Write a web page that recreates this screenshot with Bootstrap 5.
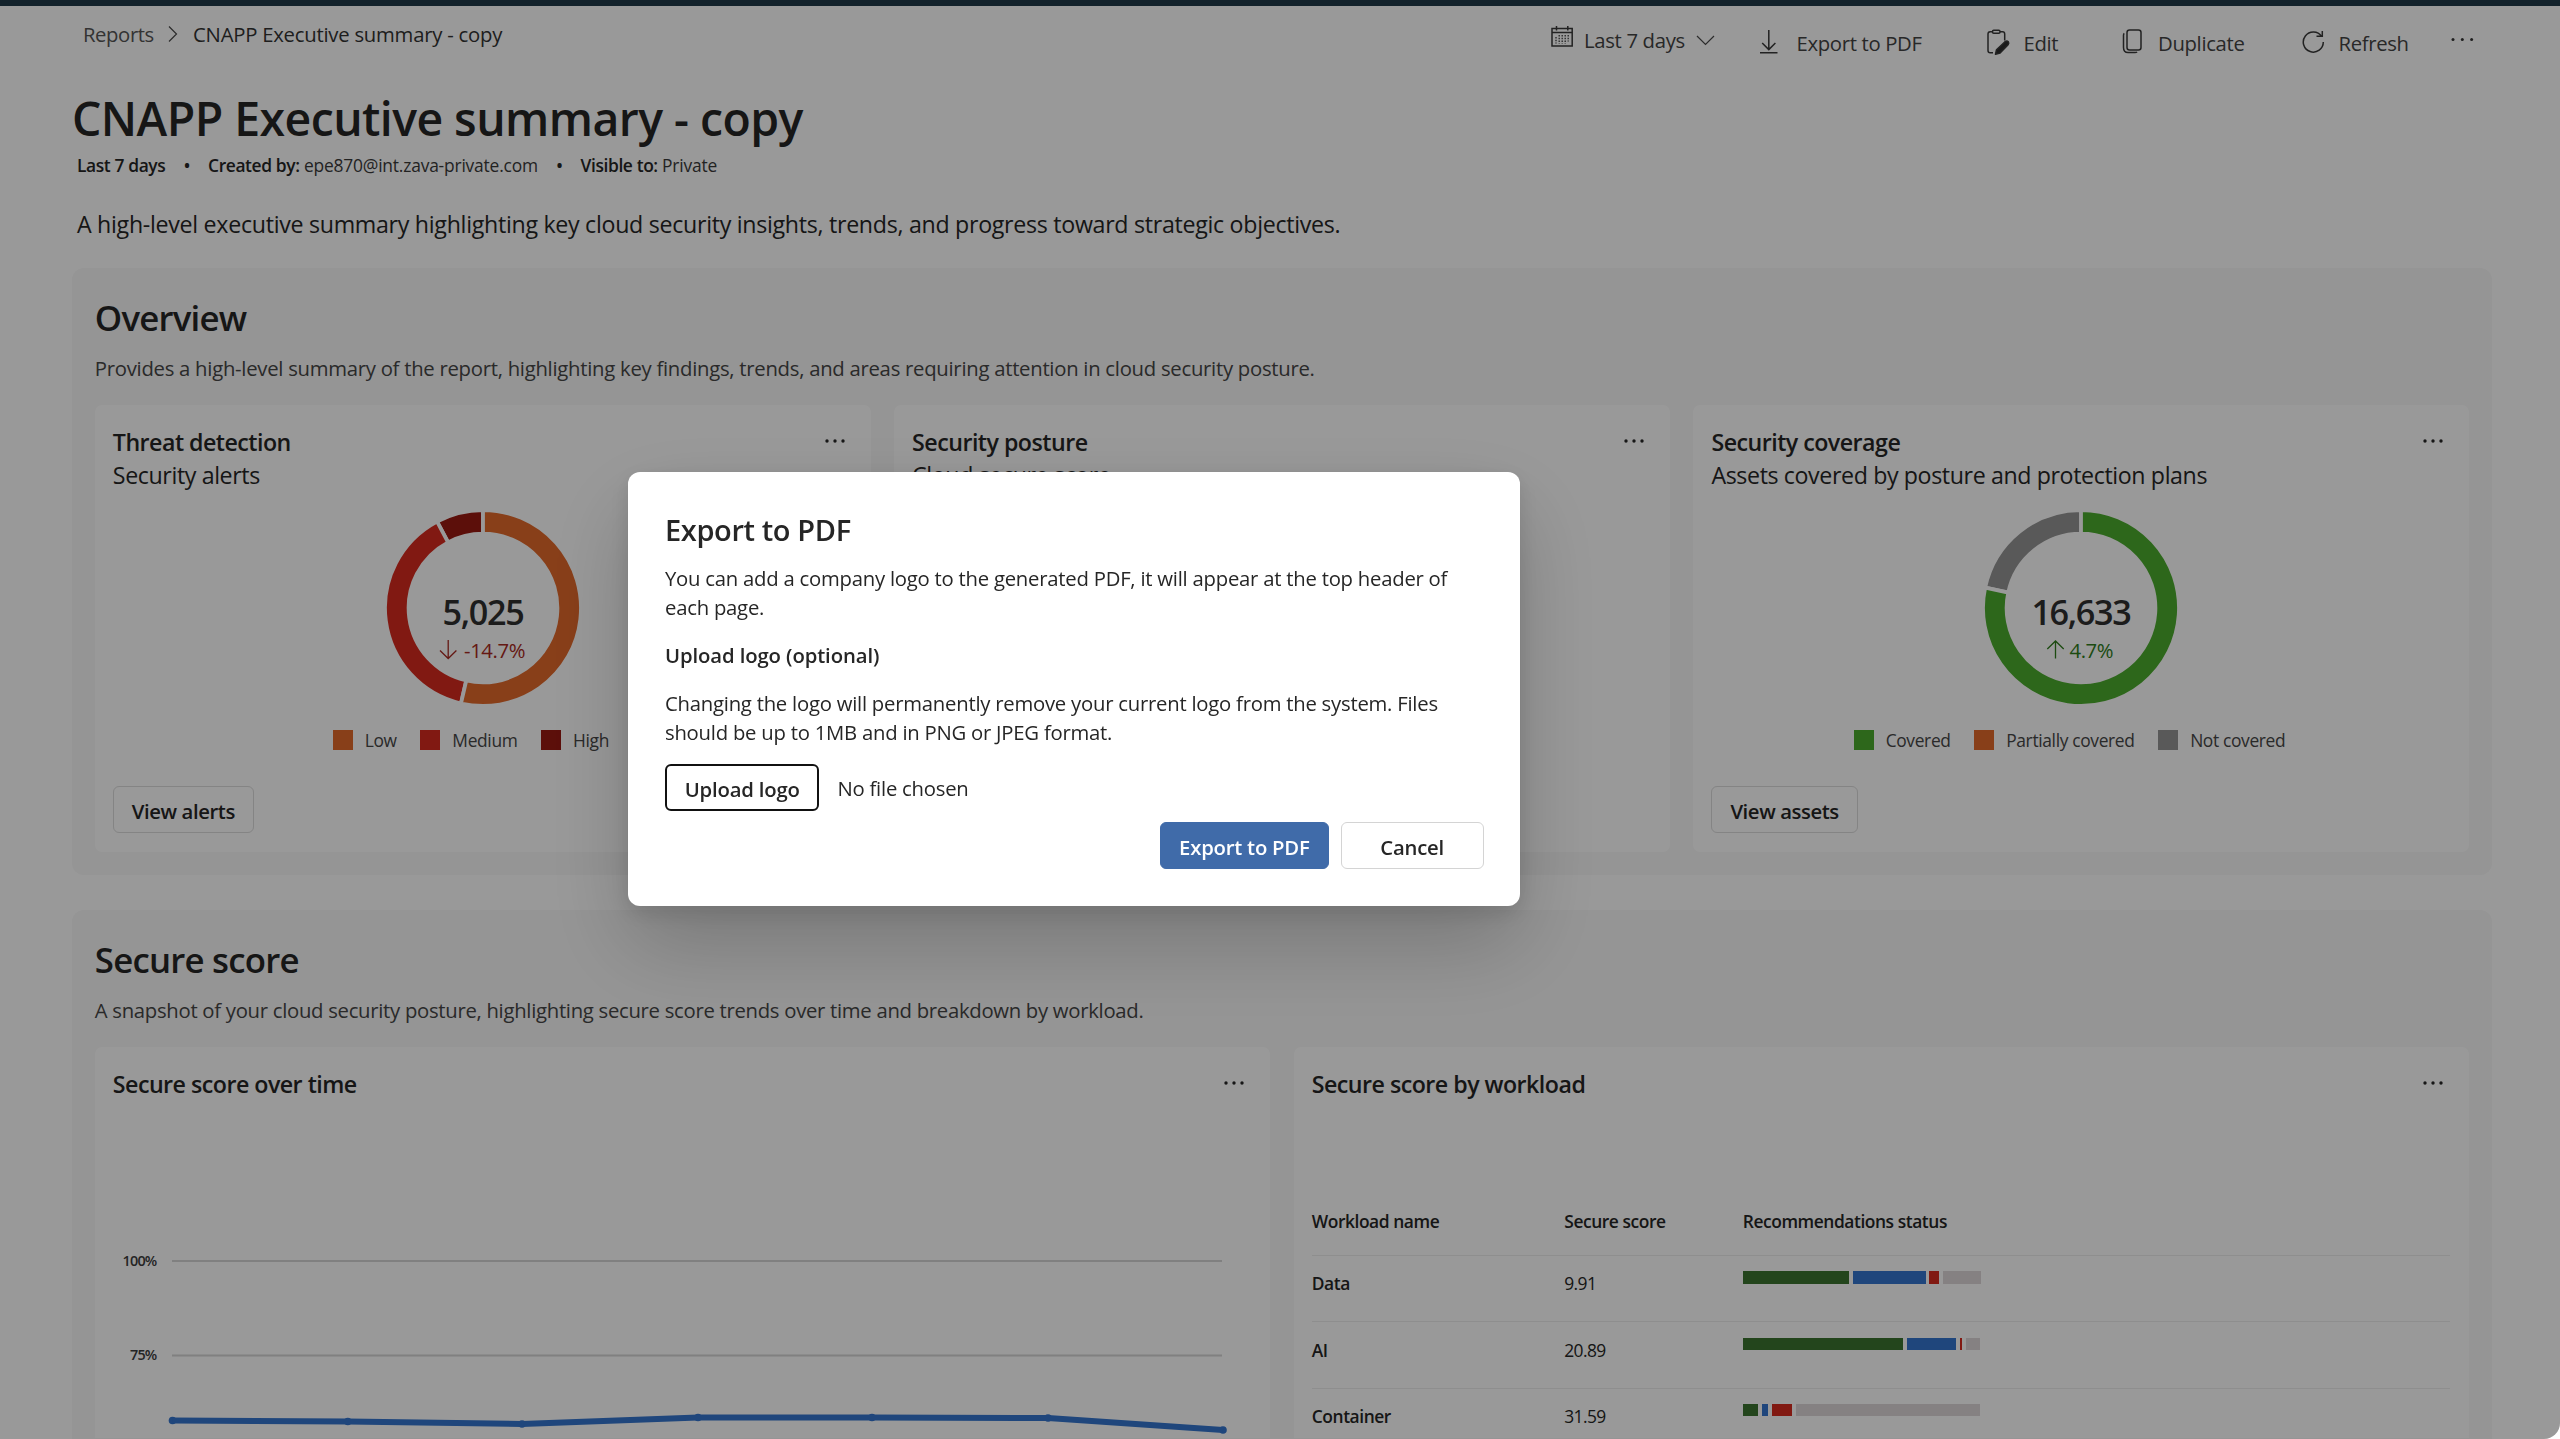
<!DOCTYPE html>
<html lang="en">
<head>
<meta charset="utf-8">
<meta name="viewport" content="width=device-width, initial-scale=1">
<title>CNAPP Executive summary - copy</title>
<link href="https://cdn.jsdelivr.net/npm/bootstrap@5.3.0/dist/css/bootstrap.min.css" rel="stylesheet">
<style>
  :root { --ink:#262626; --ink2:#464646; --low:#e3692b; --medium:#d72b1e; --high:#991911; --covered:#4bac2d; --none:#949494; }
  html, body { height:100%; overflow:hidden; }
  body { font-family:"Segoe UI","Open Sans","Noto Sans",sans-serif; font-size:20.3px; line-height:30px; letter-spacing:-.013em; color:var(--ink); background:#fff; }
  svg { display:block; flex:none; }
  svg text { font-family:"Segoe UI","Open Sans","Noto Sans",sans-serif; }
  .ic { fill:none; stroke:#3a3a3a; stroke-width:1.5; }
  .ic.thin { stroke:#4a4a4a; stroke-width:1.2; }
  .topstrip { height:6px; background:#213a49; }
  .page { padding:0 68px 0 72px; }
  .headbar { height:82px; }
  .crumbs { padding:13px 0 0 11px; gap:14.6px; color:#555; letter-spacing:-.02em; height:43px; }
  .crumbs .here { color:#333; letter-spacing:-.0115em; }
  .tools { display:grid; grid-template-columns:209px 227px 134.5px 180.5px 149px 26px; margin-right:15px; color:#444; letter-spacing:-.016em; }
  .tool { height:60px; }
  .tool.cmd { padding-top:22px; }
  .tool.cmd .lead-ic { width:36.5px; flex:none; padding-top:1px; }
  .tool .cal { margin:20px 10px 0 0; }
  .tool .when { padding-top:19px; }
  .tool .chev { margin:29px 0 0 11px; }
  .report-title { font-size:46.4px; line-height:60px; font-weight:600; letter-spacing:-.012em; margin:0; }
  .meta { font-size:17.4px; line-height:24px; margin-top:5px; padding-left:5px; color:#3a3a3a; letter-spacing:-.011em; }
  .meta b { font-weight:600; color:var(--ink); letter-spacing:-.022em; }
  .meta .sep { margin:0 18px 0 18.5px; }
  .intro { font-size:23.2px; line-height:32px; margin:31px 0 28px; padding-left:5px; letter-spacing:-.0125em; }
  .panel { background:#f8f8f8; border-radius:12px; padding:25.5px 22.8px 23px; margin-bottom:35px; height:607px; }
  .panel.cut { height:529px; margin:0; padding-bottom:0; border-radius:12px 12px 0 0; }
  .panel h2 { font-size:34.8px; line-height:48px; font-weight:600; letter-spacing:-.022em; margin:0; }
  .panel .blurb { margin:11.5px 0 22px; color:var(--ink2); }
  .panel.cut .blurb { letter-spacing:-.014em; }
  .tiles { gap:23.5px; }
  .tile { flex:1 1 0; min-width:0; border:0; border-radius:7px; padding:20.5px 18px 18px; height:447px; background:#fff; --bs-card-color:var(--ink); }
  .panel.cut .tile { height:391px; padding-bottom:0; overflow:hidden; border-radius:7px 7px 0 0; }
  .tile h3 { font-size:23.2px; line-height:33px; font-weight:600; letter-spacing:-.022em; margin:0; }
  .tile .sub { font-size:23.2px; line-height:33px; letter-spacing:-.0165em; }
  .dots { margin:12px 8px 0 0; }
  .donut { margin:16px auto 0; }
  .donut .num { font-size:34.2px; font-weight:600; letter-spacing:-1.3px; fill:#303030; }
  .donut .pct { font-size:20.3px; letter-spacing:-.4px; }
  .legend-row { font-size:17.4px; line-height:24px; margin-top:20px; letter-spacing:-.02em; color:var(--ink2); }
  .legend-row span { margin-right:23.6px; }
  .legend-row i { display:block; width:20px; height:20px; margin-right:12px; }
  .btn-flat { --bs-btn-font-size:20.3px; --bs-btn-line-height:30px; --bs-btn-color:var(--ink); --bs-btn-border-color:#d4d4d4; --bs-btn-bg:#fff; --bs-btn-border-radius:6px; --bs-btn-border-width:1.5px; --bs-btn-padding-x:18px; padding-top:2.5px; padding-bottom:0; height:46.8px; font-weight:600; letter-spacing:-.02em; }
  .tile .btn-flat { margin-top:34.7px; --bs-btn-border-color:#dcdcdc; }
  .work { margin:89px 0 0; width:1138.6px; table-layout:fixed; font-size:17.4px; line-height:24px; --bs-table-color:var(--ink); --bs-table-bg:transparent; --bs-table-border-color:#ededed; color:var(--ink); }
  .work > :not(caption) > * > * { padding:15.3px 0 0; height:66.2px; vertical-align:top; border-bottom-width:1.5px; }
  .work > thead > tr > th { padding-top:19.5px; }
  .work th { font-weight:600; letter-spacing:-.025em; }
  .work td { letter-spacing:-.035em; }
  .bars { width:238px; height:12.6px; gap:3.8px; }
  .bars div { height:100%; }
  .scrim { position:fixed; inset:0; background:rgba(0,0,0,.4); border-radius:0 0 16px 0; z-index:1040; }
  .export.modal { padding:472px 0 0 628.4px; z-index:1055; overflow:hidden; }
  .export .modal-dialog { margin:0; max-width:none; width:891.8px; }
  .export .modal-content { border:0; border-radius:12px; height:434px; padding:38px 36.6px; color:var(--ink); box-shadow:0 38px 86px rgba(0,0,0,.2), 0 7px 21px rgba(0,0,0,.12); line-height:29.7px; letter-spacing:-.0115em; }
  .export h4 { font-size:29px; line-height:40px; font-weight:600; letter-spacing:-.013em; margin:0 0 13.7px; }
  .export p { margin:0; }
  .export .lbl { font-weight:600; letter-spacing:-.005em; margin:17.6px 0 18.3px; }
  .export .pick { margin-top:15.9px; gap:18px; }
  .export .pick span { padding-top:3px; }
  .export .pick .btn-flat { --bs-btn-border-color:#111; --bs-btn-border-width:2.6px; --bs-btn-padding-x:0; width:154.5px; letter-spacing:-.009em; }
  .export .acts { margin-top:11.4px; gap:12px; }
  .export .acts .btn-flat { letter-spacing:-.011em; }
  .export .acts .btn-primary { --bs-btn-bg:#406ba9; --bs-btn-border-color:#406ba9; --bs-btn-color:#fff; --bs-btn-padding-x:0; width:168.5px; }
  .export .acts .btn-cancel { --bs-btn-padding-x:0; width:143px; }
</style>
<script src="https://cdn.jsdelivr.net/npm/bootstrap@5.3.0/dist/js/bootstrap.bundle.min.js"></script>
</head>
<body>
<svg width="0" height="0" class="position-absolute"><defs>
  <g id="more"><circle cx="2" cy="3" r="1.7"/><circle cx="10" cy="3" r="1.7"/><circle cx="18" cy="3" r="1.7"/></g>
</defs></svg>
<div class="topstrip"></div>
<div class="page">
  <header class="headbar d-flex justify-content-between align-items-start">
    <nav class="crumbs d-flex align-items-center" aria-label="breadcrumb">
      <span>Reports</span>
      <svg width="10" height="16" viewBox="0 0 10 16" class="ic thin"><path d="M1 .5 8.500 8 1 15.500"/></svg>
      <span class="here">CNAPP Executive summary - copy</span>
    </nav>
    <div class="tools">
      <div class="tool d-flex">
        <svg class="ic cal" width="23" height="22" viewBox="0 0 23 22"><path d="M1 2.500h20.200v17.500H1zM1 6.500h20.200M5.500 0v4.500M16.800 0v4.500"/><path d="M5 11v6.500M8.200 9v8.500M11.200 9v8.500M14.200 9v8.500M17.200 9v6.500" stroke-width="1.300" stroke-dasharray="1.500 1.200"/></svg>
        <span class="when">Last 7 days</span>
        <svg class="ic thin chev" width="19" height="11" viewBox="0 0 19 11"><path d="M1 1l8.500 8.500L18 1"/></svg>
      </div>
      <div class="tool cmd d-flex"><div class="lead-ic"><svg class="ic" width="20" height="26" viewBox="0 0 20 26"><path d="M8.800 1v20M2.200 14l6.600 6.600 6.600-6.600M0 23.700h17.500"/></svg></div><span>Export to PDF</span></div>
      <div class="tool cmd d-flex"><div class="lead-ic"><svg class="ic" width="24" height="28" viewBox="0 0 24 28"><path d="M5.500 2.800H3.200Q1 2.800 1 5v16.500Q1 23.800 3.200 23.800H6M13 2.800h2.500Q17.700 2.800 17.700 5v6.500"/><rect x="5.500" y="1.300" width="7.500" height="3" rx="1.200"/><path d="M8.500 25.200l1-4.500 8.500-8q2-1.300 3.300 0 1 1.500-.2 3l-8 8.300z" fill="#2c2c2c" stroke-linejoin="round"/></svg></div><span>Edit</span></div>
      <div class="tool cmd d-flex"><div class="lead-ic"><svg class="ic" width="22" height="26" viewBox="0 0 22 26"><rect x="5" y="1" width="14" height="20" rx="2.500"/><path d="M2.300 4.300Q1.500 4.800 1.500 6.300v12.300q0 5 4.500 5h7q1.500 0 2-.8"/></svg></div><span>Duplicate</span></div>
      <div class="tool cmd d-flex"><div class="lead-ic"><svg class="ic" width="24" height="26" viewBox="0 0 24 26"><path d="M19.600 7.500A10 10 0 1 0 21.300 13M20.300 2v5.200h-5.800"/></svg></div><span>Refresh</span></div>
      <div class="tool pt-4"><svg class="mt-2" width="26" height="6" viewBox="0 0 26 6" fill="#333"><circle cx="2" cy="1.500" r="1.500"/><circle cx="11.300" cy="1.500" r="1.500"/><circle cx="20.600" cy="1.500" r="1.500"/></svg></div>
    </div>
  </header>

  <h1 class="report-title">CNAPP Executive summary - copy</h1>
  <div class="meta d-flex">
    <b>Last 7 days</b><b class="sep">•</b><span><b>Created by:</b> epe870@int.zava-private.com</span><b class="sep">•</b><span><b>Visible to:</b> Private</span>
  </div>
  <p class="intro">A high-level executive summary highlighting key cloud security insights, trends, and progress toward strategic objectives.</p>

  <section class="panel">
    <h2>Overview</h2>
    <p class="blurb">Provides a high-level summary of the report, highlighting key findings, trends, and areas requiring attention in cloud security posture.</p>
    <div class="tiles d-flex">
      <div class="card tile">
        <div class="d-flex justify-content-between"><h3>Threat detection</h3><svg class="dots" width="20" height="6" fill="#262626"><use href="#more"/></svg></div>
        <div class="sub">Security alerts</div>
        <svg class="donut" width="200" height="200" viewBox="-100 -100 200 200" data-parts="193:#e3692b,332:#d72b1e,360:#991911">
          <text class="num" text-anchor="middle" y="16.500">5,025</text>
          <g fill="none" stroke="#a82a22" stroke-width="1.300"><path d="M-34.800 32v18M-43 42.500l8.200 8 8.200-8"/></g>
          <text class="pct" x="-19" y="50" fill="#a82a22">-14.7%</text>
        </svg>
        <div class="legend-row d-flex justify-content-center">
          <span class="d-flex align-items-center"><i style="background:var(--low)"></i>Low</span><span class="d-flex align-items-center"><i style="background:var(--medium)"></i>Medium</span><span class="d-flex align-items-center"><i style="background:var(--high)"></i>High</span>
        </div>
        <div><button class="btn btn-flat">View alerts</button></div>
      </div>
      <div class="card tile">
        <div class="d-flex justify-content-between"><h3>Security posture</h3><svg class="dots" width="20" height="6" fill="#262626"><use href="#more"/></svg></div>
        <div class="sub">Cloud secure score</div>
      </div>
      <div class="card tile">
        <div class="d-flex justify-content-between"><h3>Security coverage</h3><svg class="dots" width="20" height="6" fill="#262626"><use href="#more"/></svg></div>
        <div class="sub">Assets covered by posture and protection plans</div>
        <svg class="donut" width="200" height="200" viewBox="-100 -100 200 200" data-parts="282:#4bac2d,360:#949494">
          <text class="num" text-anchor="middle" y="16.500">16,633</text>
          <g fill="none" stroke="#2f7d1c" stroke-width="1.300"><path d="M-25.500 32.500v18M-33.700 41l8.200-8 8.200 8"/></g>
          <text class="pct" x="-11.500" y="50" fill="#2f7d1c">4.7%</text>
        </svg>
        <div class="legend-row d-flex justify-content-center">
          <span class="d-flex align-items-center"><i style="background:var(--covered)"></i>Covered</span><span class="d-flex align-items-center"><i style="background:var(--low)"></i>Partially covered</span><span class="d-flex align-items-center"><i style="background:var(--none)"></i>Not covered</span>
        </div>
        <div><button class="btn btn-flat">View assets</button></div>
      </div>
    </div>
  </section>

  <section class="panel cut">
    <h2>Secure score</h2>
    <p class="blurb">A snapshot of your cloud security posture, highlighting secure score trends over time and breakdown by workload.</p>
    <div class="tiles d-flex">
      <div class="card tile">
        <div class="d-flex justify-content-between"><h3>Secure score over time</h3><svg class="dots" width="20" height="6" fill="#262626"><use href="#more"/></svg></div>
        <svg width="1138" height="338" viewBox="113 1100.500 1138 338">
          <g stroke="#d6d6d6" stroke-width="2"><path d="M172 1260.500H1222M172 1355H1222"/></g>
          <g font-size="14.400" font-weight="600" text-anchor="end" letter-spacing="-.8" fill="#3c3c3c"><text x="156.500" y="1265.500">100%</text><text x="156.500" y="1359.800">75%</text></g>
          <g fill="#3475cf"><circle cx="172.500" cy="1420" r="3.800"/><circle cx="347.800" cy="1421" r="3.800"/><circle cx="522" cy="1423.500" r="3.800"/><circle cx="698" cy="1417" r="3.800"/><circle cx="872" cy="1417" r="3.800"/><circle cx="1048" cy="1417.500" r="3.800"/><circle cx="1223" cy="1429.500" r="3.800"/></g>
          <path d="M172.500 1420L347.800 1421 522 1423.500 698 1417 872 1417 1048 1417.500 1223 1429.500" fill="none" stroke="#3475cf" stroke-width="6" stroke-linejoin="round"/>
        </svg>
      </div>
      <div class="card tile">
        <div class="d-flex justify-content-between"><h3>Secure score by workload</h3><svg class="dots" width="20" height="6" fill="#262626"><use href="#more"/></svg></div>
        <table class="table work">
          <colgroup><col style="width:252.500px"><col style="width:178.500px"><col></colgroup>
          <thead><tr><th>Workload name</th><th>Secure score</th><th>Recommendations status</th></tr></thead>
          <tbody>
            <tr><th>Data</th><td>9.91</td><td class="bar-cell" data-bars="106,73,9.500,38"></td></tr>
            <tr><th>AI</th><td>20.89</td><td class="bar-cell" data-bars="160.500,49,2.500,13.500"></td></tr>
            <tr><th>Container</th><td>31.59</td><td class="bar-cell" data-bars="15.300,6,20.500,184.500"></td></tr>
          </tbody>
        </table>
      </div>
    </div>
  </section>
</div>

<div class="scrim"></div>
<div class="modal export d-block" tabindex="-1" role="dialog">
  <div class="modal-dialog">
    <div class="modal-content">
      <h4>Export to PDF</h4>
      <p>You can add a company logo to the generated PDF, it will appear at the top header of<br>each page.</p>
      <p class="lbl">Upload logo (optional)</p>
      <p>Changing the logo will permanently remove your current logo from the system. Files<br>should be up to 1MB and in PNG or JPEG format.</p>
      <div class="pick d-flex align-items-center"><button class="btn btn-flat">Upload logo</button><span>No file chosen</span></div>
      <div class="acts d-flex justify-content-end"><button class="btn btn-flat btn-primary">Export to PDF</button><button class="btn btn-flat btn-cancel">Cancel</button></div>
    </div>
  </div>
</div>
<script>
  // Donut rings: each part is "end angle:colour", clockwise from the top.
  const NS = 'http://www.w3.org/2000/svg';
  document.querySelectorAll('.donut').forEach(svg => {
    const parts = svg.dataset.parts.split(',').map(p => p.split(':'));
    const pt = (r, a) => { const t = a * Math.PI / 180; return (r * Math.sin(t)).toFixed(2) + ' ' + (-r * Math.cos(t)).toFixed(2); };
    let from = 0;
    parts.forEach(([end, color]) => {
      const a = from, b = +end, big = b - a > 180 ? 1 : 0, p = document.createElementNS(NS, 'path');
      p.setAttribute('d', `M${pt(98, a)}A98 98 0 ${big} 1 ${pt(98, b)}L${pt(74.4, b)}A74.4 74.4 0 ${big} 0 ${pt(74.4, a)}Z`);
      p.setAttribute('fill', color); p.setAttribute('stroke', '#fff'); p.setAttribute('stroke-width', 3.8);
      svg.prepend(p); from = b;
    });
  });
  // Status bars: healthy, medium, high, not applicable.
  const colors = ['#3b742f', '#3475cf', '#d72b1e', '#ded8d9'];
  document.querySelectorAll('.bar-cell').forEach(td => {
    td.innerHTML = '<div class="bars d-flex">' + td.dataset.bars.split(',').map((w, i) => `<div style="width:${+w}px;background:${colors[i]}"></div>`).join('') + '</div>';
  });
</script>
</body>
</html>
